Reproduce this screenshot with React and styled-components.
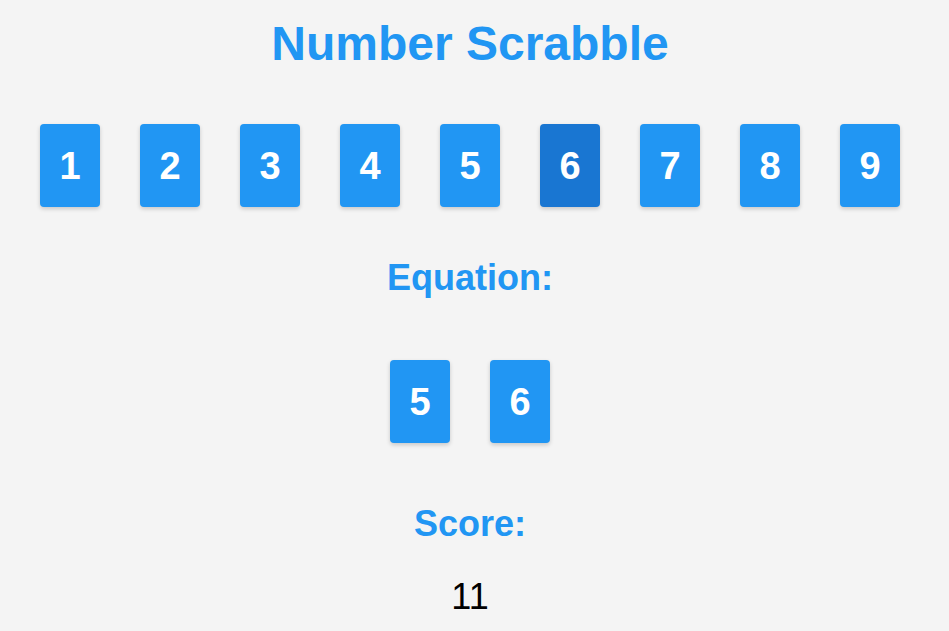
import styled, { createGlobalStyle } from "styled-components";

const GlobalStyle = createGlobalStyle`
body {
  margin: 0;
  background: #f4f4f4;
  font-family: "Liberation Sans", Arial, sans-serif;
}
`

const Page = styled.div`
display: flex;
flex-direction: column;
align-items: center;
padding-right: 9px;
padding-top: 16px;
`
const Title = styled.h1`
margin: 0;
font-size: 48px;
line-height: 56px;
font-weight: bold;
color: #2196f3;
`
const TileRow = styled.div`
display: flex;
justify-content: center;
margin-top: ${(p) => p.$top}px;
`
const Tile = styled.div`
width: 60px;
height: 83px;
margin: 0 20px;
display: flex;
align-items: center;
justify-content: center;
background: ${(p) => (p.$selected ? "#1976d2" : "#2196f3")};
color: #fff;
font-size: 38px;
font-weight: bold;
line-height: 1;
border-radius: 4px;
box-shadow: 0 2px 4px rgba(0, 0, 0, 0.18);
cursor: pointer;
`
const Heading = styled.h2`
margin: ${(p) => p.$top}px 0 0;
font-size: 36px;
line-height: 42px;
font-weight: bold;
color: #2196f3;
`
const ScoreValue = styled.div`
margin-top: 31px;
font-size: 36px;
line-height: 42px;
color: #000;
`

const numbers = [1, 2, 3, 4, 5, 6, 7, 8, 9];
const equation = [5, 6];

const App = () => {
    const selected = [6];
    return (
        <>
            <GlobalStyle />
            <Page>
                <Title>Number Scrabble</Title>
                <TileRow $top={52}>
                    {numbers.map((n) => (
                        <Tile key={n} $selected={selected.includes(n)}>{n}</Tile>
                    ))}
                </TileRow>
                <Heading $top={50}>Equation:</Heading>
                <TileRow $top={61}>
                    {equation.map((n) => (
                        <Tile key={n}>{n}</Tile>
                    ))}
                </TileRow>
                <Heading $top={60}>Score:</Heading>
                <ScoreValue>11</ScoreValue>
            </Page>
        </>
    )
}
export default App;
